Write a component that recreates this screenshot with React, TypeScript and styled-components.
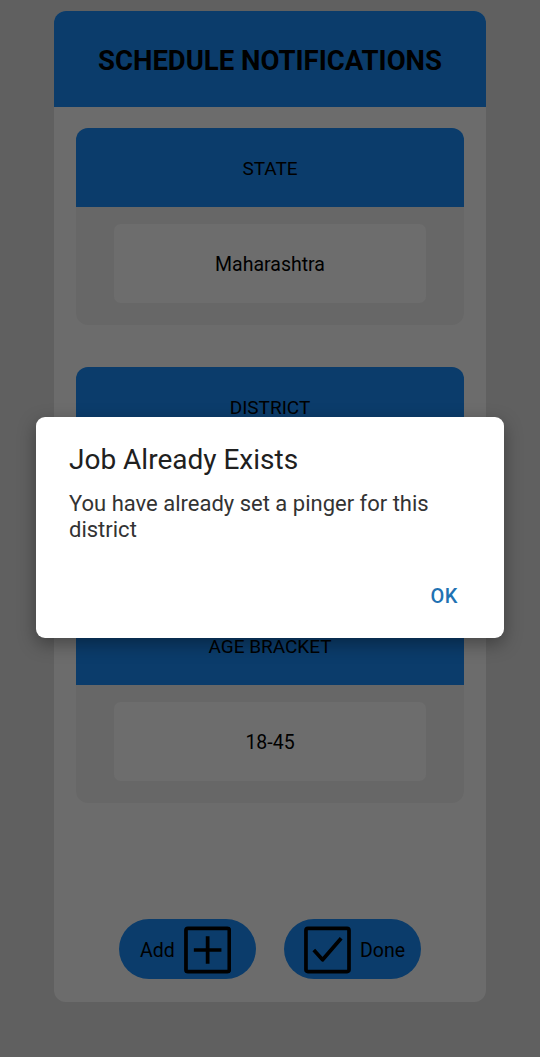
import React from "react";
import styled, { createGlobalStyle } from "styled-components";

const Global = createGlobalStyle`
  html, body { margin: 0; padding: 0; }
  body {
    background: #dedede;
    font-family: Roboto, "Liberation Sans", sans-serif;
    width: 540px;
    height: 1057px;
    overflow: hidden;
  }
`;

const Screen = styled.div`
  position: relative;
  width: 540px;
  height: 1057px;
  padding-top: 11px;
  box-sizing: border-box;
  display: flex;
  flex-direction: column;
  align-items: center;
`;

const Card = styled.div`
  width: 432px;
  height: 991px;
  background: #fbfbfb;
  border-radius: 12px;
  overflow: hidden;
  display: flex;
  flex-direction: column;
  align-items: center;
`;

const Header = styled.div`
  width: 100%;
  height: 96px;
  padding-top: 2px;
  box-sizing: border-box;
  background: #1a8cf8;
  display: flex;
  align-items: center;
  justify-content: center;
  font-weight: 700;
  font-size: 27.5px;
  color: #000;
`;

const Sections = styled.div`
  display: flex;
  flex-direction: column;
  gap: 42px;
  margin-top: 21px;
`;

const Section = styled.div`
  width: 388px;
  height: 197px;
  background: #efefef;
  border-radius: 12px;
  overflow: hidden;
  display: flex;
  flex-direction: column;
  align-items: center;
`;

const SectionHeader = styled.div`
  width: 100%;
  height: 79px;
  padding-top: 2px;
  box-sizing: border-box;
  background: #1a8cf8;
  display: flex;
  align-items: center;
  justify-content: center;
  font-size: 19px;
  color: #000;
`;

const Field = styled.div`
  width: 312px;
  height: 79px;
  margin-top: 17px;
  padding-top: 2px;
  box-sizing: border-box;
  background: #fdfdfd;
  border-radius: 7px;
  display: flex;
  align-items: center;
  justify-content: center;
  font-size: 19.5px;
  color: #000;
`;

const Buttons = styled.div`
  margin-top: auto;
  margin-bottom: 23px;
  display: flex;
  gap: 28px;
`;

const Pill = styled.button<{ $iconFirst?: boolean }>`
  width: 137px;
  height: 60px;
  border: none;
  border-radius: 30px;
  background: #1a8cf8;
  display: flex;
  align-items: center;
  justify-content: center;
  gap: 9px;
  flex-direction: ${(p) => (p.$iconFirst ? "row-reverse" : "row")};
  padding: ${(p) => (p.$iconFirst ? "2px 16px 0 20px" : "2px 25px 0 21px")};
  font-family: Roboto, "Liberation Sans", sans-serif;
  font-size: 19.5px;
  color: #000;
`;

const Overlay = styled.div`
  position: absolute;
  inset: 0;
  background: rgba(0, 0, 0, 0.57);
`;

const Dialog = styled.div`
  position: absolute;
  left: 36px;
  top: 417px;
  width: 468px;
  height: 221px;
  background: #fff;
  border-radius: 9px;
  box-shadow: 0 6px 18px rgba(0, 0, 0, 0.35);
  box-sizing: border-box;
  padding: 25px 33px 0 33px;
  display: flex;
  flex-direction: column;
`;

const DialogTitle = styled.div`
  font-family: Roboto, "Liberation Sans", sans-serif;
  font-size: 28px;
  color: #202020;
  line-height: 36px;
`;

const DialogBody = styled.div`
  margin-top: 13px;
  font-family: Roboto, "Liberation Sans", sans-serif;
  font-size: 22px;
  line-height: 26px;
  color: #333;
`;

const Actions = styled.div`
  margin-top: auto;
  margin-bottom: 30px;
  display: flex;
  justify-content: flex-end;
`;

const OkButton = styled.button`
  border: none;
  background: none;
  padding: 0 13px 0 0;
  font-family: Roboto, "Liberation Sans", sans-serif;
  font-size: 20px;
  font-weight: 500;
  letter-spacing: 0.6px;
  color: #1f72b3;
`;

const PlusIcon = () => (
  <svg width="48" height="48" viewBox="0 0 48 48">
    <rect x="2" y="2" width="44" height="44" rx="2" fill="none" stroke="#000" strokeWidth="3.8" />
    <path d="M24 10v28M10 24h28" stroke="#000" strokeWidth="3.8" fill="none" />
  </svg>
);

const CheckIcon = () => (
  <svg width="48" height="48" viewBox="0 0 48 48">
    <rect x="2" y="2" width="44" height="44" rx="2" fill="none" stroke="#000" strokeWidth="3.8" />
    <path d="M10 24l9 10L38 12" stroke="#000" strokeWidth="3.8" fill="none" strokeLinejoin="round" />
  </svg>
);

const sections = [
  { title: "STATE", value: "Maharashtra" },
  { title: "DISTRICT", value: "" },
  { title: "AGE BRACKET", value: "18-45" },
];

export default function App() {
  return (
    <>
      <Global />
      <Screen>
        <Card>
          <Header>SCHEDULE NOTIFICATIONS</Header>
          <Sections>
            {sections.map((s) => (
              <Section key={s.title}>
                <SectionHeader>{s.title}</SectionHeader>
                <Field>{s.value}</Field>
              </Section>
            ))}
          </Sections>
          <Buttons>
            <Pill>
              <span>Add</span>
              <PlusIcon />
            </Pill>
            <Pill $iconFirst>
              <span>Done</span>
              <CheckIcon />
            </Pill>
          </Buttons>
        </Card>
        <Overlay />
        <Dialog>
          <DialogTitle>Job Already Exists</DialogTitle>
          <DialogBody>You have already set a pinger for this district</DialogBody>
          <Actions>
            <OkButton>OK</OkButton>
          </Actions>
        </Dialog>
      </Screen>
    </>
  );
}
